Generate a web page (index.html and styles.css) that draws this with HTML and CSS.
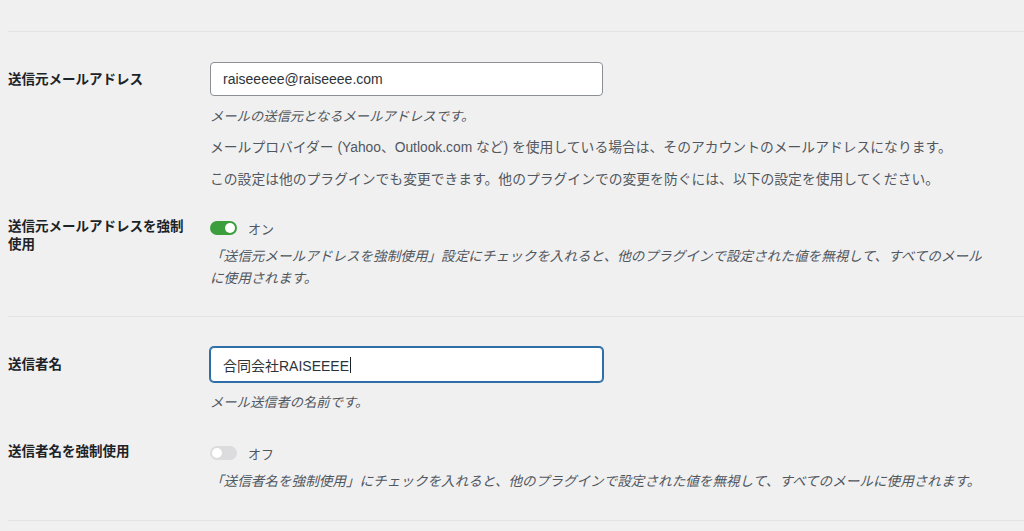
FILE: index.html
```html
<!DOCTYPE html>
<html lang="ja">
<head>
<meta charset="utf-8">
<title>メール設定</title>
<link rel="stylesheet" href="styles.css">
</head>
<body>
<div class="page">
  <div class="top-space"></div>

  <section class="group">
    <div class="row">
      <div class="label label--input">送信元メールアドレス</div>
      <div class="field">
        <input class="input" type="text" value="raiseeeee@raiseeee.com">
        <p class="desc desc--italic desc--first">メールの送信元となるメールアドレスです。</p>
        <p class="desc desc--plain">メールプロバイダー (Yahoo、Outlook.com など) を使用している場合は、そのアカウントのメールアドレスになります。</p>
        <p class="desc desc--plain desc--gap">この設定は他のプラグインでも変更できます。他のプラグインでの変更を防ぐには、以下の設定を使用してください。</p>
      </div>
    </div>
    <div class="row row--toggle">
      <div class="label label--toggle">送信元メールアドレスを強制使用</div>
      <div class="field">
        <div class="switch-line">
          <span class="switch switch--on"><span class="knob"></span></span>
          <span class="switch-text">オン</span>
        </div>
        <p class="desc desc--italic desc--wrap">「送信元メールアドレスを強制使用」設定にチェックを入れると、他のプラグインで設定された値を無視して、すべてのメールに使用されます。</p>
      </div>
    </div>
  </section>

  <section class="group group--last">
    <div class="row">
      <div class="label label--input">送信者名</div>
      <div class="field">
        <div class="input input--focus"><span>合同会社RAISEEEE</span><span class="caret"></span></div>
        <p class="desc desc--italic desc--first">メール送信者の名前です。</p>
      </div>
    </div>
    <div class="row row--toggle row--toggle-wide">
      <div class="label label--toggle">送信者名を強制使用</div>
      <div class="field">
        <div class="switch-line">
          <span class="switch"><span class="knob"></span></span>
          <span class="switch-text">オフ</span>
        </div>
        <p class="desc desc--italic desc--wrap">「送信者名を強制使用」にチェックを入れると、他のプラグインで設定された値を無視して、すべてのメールに使用されます。</p>
      </div>
    </div>
  </section>
  <div class="bottom-line"></div>
</div>
</body>
</html>
```

FILE: styles.css
```css
html, body {
  margin: 0;
  padding: 0;
  background: #f0f0f1;
}

body {
  font-family: "Liberation Sans", "Noto Sans CJK JP", sans-serif;
  color: #1d2327;
  height: 531px;
  overflow: hidden;
}

.page {
  padding-left: 8px;
}

.top-space {
  height: 31px;
}

.group {
  border-top: 1px solid #e3e3e4;
  padding: 30px 0 26px;
}

.group--last {
  padding-bottom: 27px;
}

.bottom-line {
  border-top: 1px solid #e3e3e4;
  height: 10px;
}

.row {
  display: grid;
  grid-template-columns: 202px 782px;
}

.row--toggle {
  margin-top: 28px;
}

.row--toggle-wide {
  margin-top: 30px;
}

.label {
  font-weight: bold;
  font-size: 13.5px;
  line-height: 18px;
  padding-right: 14px;
}

.label--input {
  padding-top: 9px;
}

.label--toggle {
  padding-top: 0;
}

.field {
  min-width: 0;
}

.input {
  box-sizing: border-box;
  display: flex;
  align-items: center;
  width: 393px;
  height: 34px;
  margin: 0;
  padding: 0 12px;
  border: 1px solid #8c8f94;
  border-radius: 4px;
  background: #fff;
  font-family: "Liberation Sans", "Noto Sans CJK JP", sans-serif;
  font-size: 14px;
  color: #2c3338;
  outline: none;
}

.input--focus {
  height: 35px;
  border-color: #2f6ea6;
  box-shadow: 0 0 0 1px #2f6ea6;
}

.caret {
  display: inline-block;
  width: 1px;
  height: 16px;
  background: #1d2327;
  margin-left: 1px;
}

.desc {
  margin: 0;
  color: #50575e;
  line-height: 20px;
}

.desc--italic {
  font-style: italic;
  font-size: 13.3px;
}

.desc--first {
  margin-top: 11px;
}

.desc--plain {
  font-size: 13.8px;
  margin-top: 11px;
}

.desc--gap {
  margin-top: 12px;
}

.desc--wrap {
  font-size: 13.6px;
  line-height: 22px;
  margin-top: 8px;
}

.switch-line {
  display: flex;
  align-items: center;
  height: 20px;
}

.switch {
  position: relative;
  display: inline-block;
  width: 27px;
  height: 14px;
  border-radius: 7px;
  background: #dcdcde;
}

.switch .knob {
  position: absolute;
  top: 2px;
  left: 2px;
  width: 10px;
  height: 10px;
  border-radius: 50%;
  background: #fff;
}

.switch--on {
  background: #3c9e3c;
}

.switch--on .knob {
  left: 15px;
}

.switch-text {
  margin-left: 11px;
  font-size: 13px;
  color: #50575e;
}
```
